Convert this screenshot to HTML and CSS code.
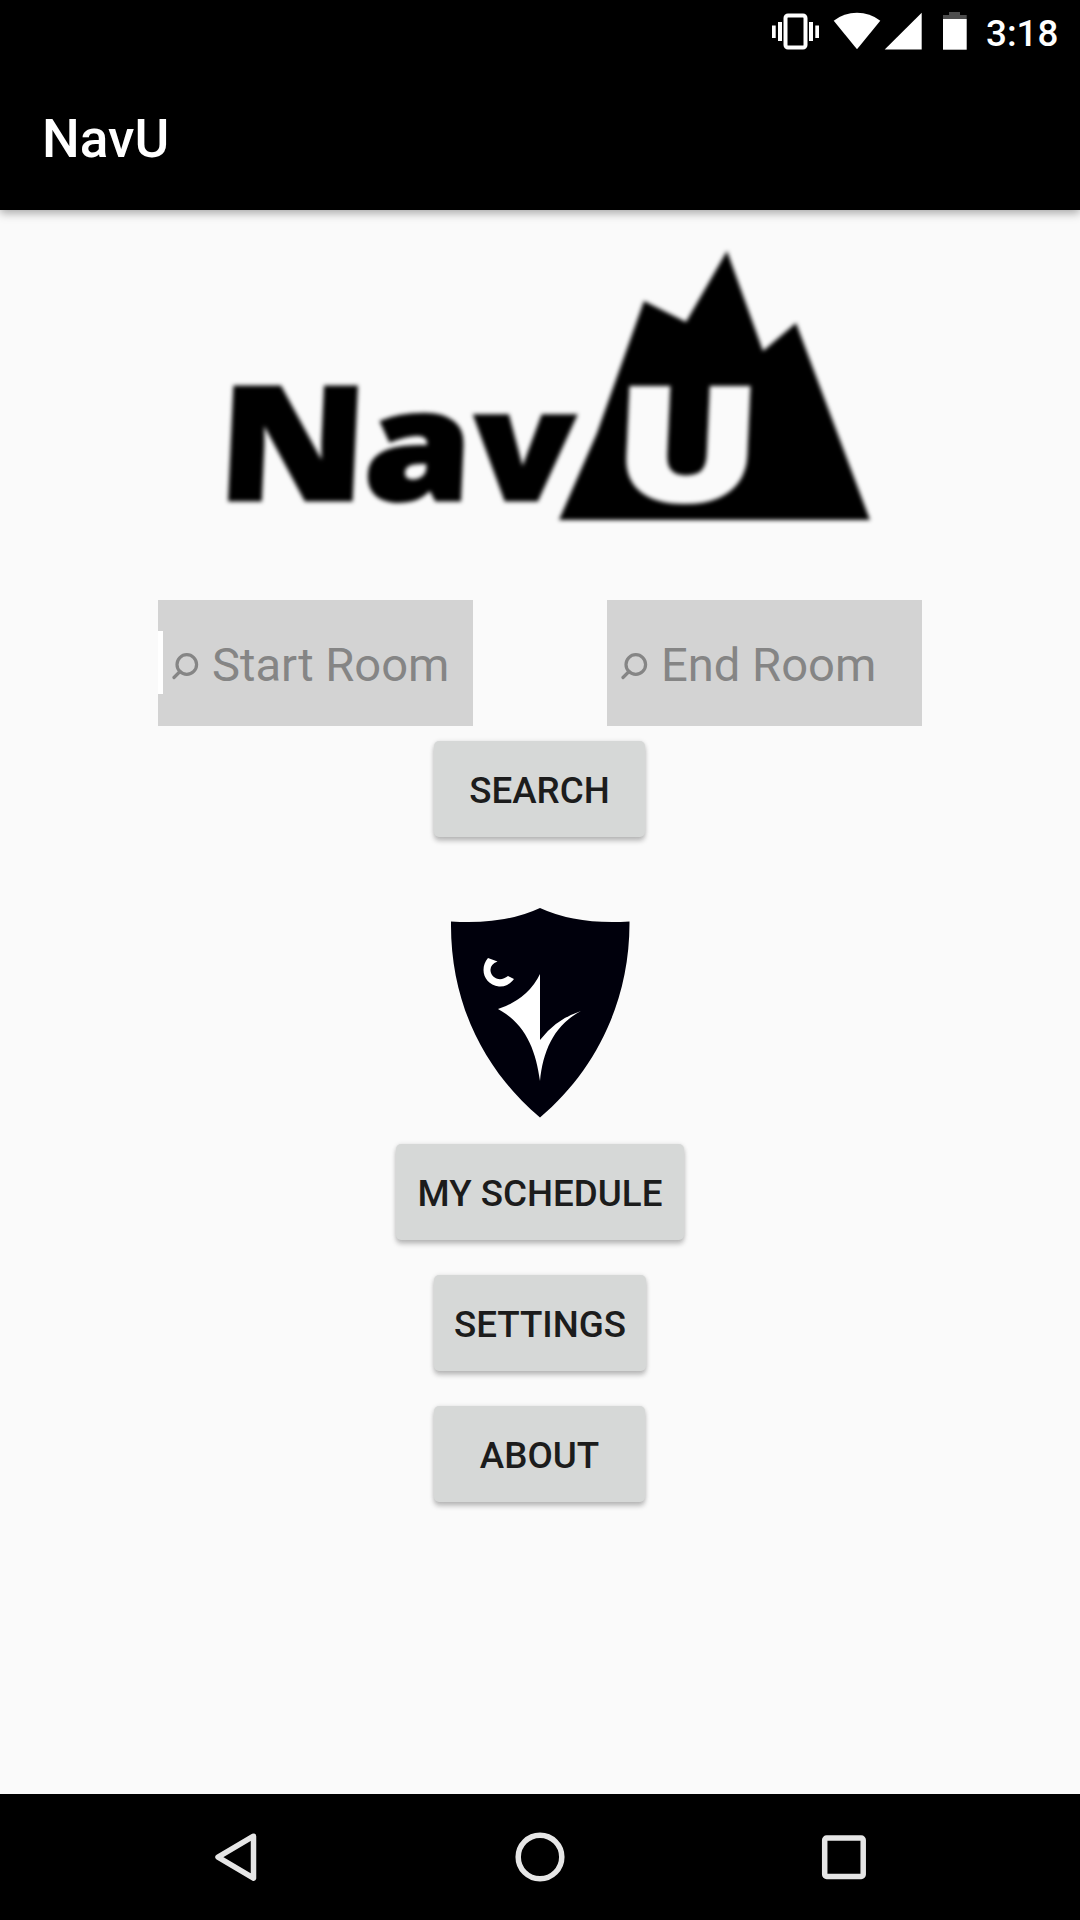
FILE: index.html
```html
<!DOCTYPE html>
<html lang="en">
<head>
<meta charset="utf-8">
<title>NavU</title>
<link rel="stylesheet" href="styles.css">
</head>
<body>
<div class="screen">
  <header class="top">
    <div class="status-bar">
      <svg class="status-icons" viewBox="0 0 200 63">
        <rect x="15.500" y="15.500" width="20" height="32" rx="2.500" fill="none" stroke="#fff" stroke-width="4"/>
        <path d="M2 25.500h3.700v12.500h-3.700zM8 22h4v19h-4zM39 22h4v19h-4zM45.300 25.500h3.700v12.500h-3.700z" fill="#fff"/>
        <path d="M63.700 20.700Q74 12.800 87 12.800T110.300 20.700L87 49.300z" fill="#fff"/>
        <path d="M151.700 12.700v36.800h-37z" fill="#fff"/>
        <path d="M173 19v-4h6v-3h11v3h6.700v4z" fill="#4d4d4d"/>
        <path d="M173 19h23.700v30.700h-23.700z" fill="#fff"/>
      </svg>
      <span class="clock">3:18</span>
    </div>
    <h1 class="title">NavU</h1>
  </header>

  <main class="content">
    <svg class="logo" viewBox="210 230 680 340" role="img" aria-label="NavU">
      <path d="M559 520L597 433L644 301L686 322L727 251L763 351L796 323L870 520z"/>
      <g class="logo-text" transform="translate(0 500) skewX(-2.600)">
        <text transform="translate(216 0) scale(1.105 .980)">N</text>
        <text transform="translate(362 0) scale(1.080 .945)">a</text>
        <text transform="translate(471 0) scale(1.020 .945)">v</text>
        <text class="logo-u" transform="translate(612 1) scale(1.190 .985)">U</text>
      </g>
    </svg>

    <div class="fields">
      <label class="field">
        <i class="cursor"></i>
        <svg class="search-icon" viewBox="0 0 28 28"><circle cx="14.800" cy="12.500" r="9.800"/><path d="M8 19.500L2 25.500"/></svg>
        <span>Start Room</span>
      </label>
      <label class="field">
        <svg class="search-icon" viewBox="0 0 28 28"><circle cx="14.800" cy="12.500" r="9.800"/><path d="M8 19.500L2 25.500"/></svg>
        <span>End Room</span>
      </label>
    </div>
    <button class="btn btn-short btn-search">Search</button>

    <svg class="shield" viewBox="0 0 180 212">
      <path fill="#00000c" d="M1 14.500Q54 18 90 1Q127 18 179.500 14.500C180 96 144 165 90 210.500C36 165 0 98 1 14.500z"/>
      <path fill="#fff" d="M90 67Q78 92 48 102C76 117 86 144 90 174C93 144 104 118 131 104Q106 112 90 133z"/>
      <path fill="#fff" d="M38 51L47.500 54.500Q38.500 58 41 66C44 73 52 74 58 69L64 72Q58 80 49 79.500C34 77 29 62 38 51z"/>
    </svg>

    <nav class="actions">
      <button class="btn btn-wide">My Schedule</button>
      <button class="btn">Settings</button>
      <button class="btn btn-short">About</button>
    </nav>
  </main>

  <footer class="nav-bar">
    <svg viewBox="0 0 126 126"><path d="M80.500 42.200L45 63.200L80.500 84.200z"/></svg>
    <svg viewBox="0 0 126 126"><circle cx="63" cy="63" r="21.800"/></svg>
    <svg viewBox="0 0 126 126"><rect x="43.700" y="44" width="38.500" height="38.500" rx="2"/></svg>
  </footer>
</div>
</body>
</html>
```
FILE: styles.css
```css
* { box-sizing: border-box; }
body { margin: 0; background: #fafafa; font-family: Roboto, sans-serif; }
svg { display: block; flex: none; }

.screen { width: 1080px; height: 1920px; display: flex; flex-direction: column; overflow: hidden; }

.top { height: 210px; background: #000; box-shadow: 0 3px 9px rgba(0, 0, 0, .34); }
.status-bar { height: 63px; display: flex; justify-content: flex-end; align-items: center; padding-right: 20px; }
.status-icons { width: 200px; height: 63px; }
.clock { width: 90px; padding-left: 16px; white-space: nowrap; color: #fff; font-size: 36.750px; font-weight: 500; line-height: 63px; padding-top: 4px; }
.title { margin: 0; padding-left: 42px; height: 147px; line-height: 153px; color: #fff; font-size: 53.200px; font-weight: 500; }

.content { flex: 1; display: flex; flex-direction: column; align-items: center; padding-top: 20px; }
.logo { width: 680px; height: 340px; margin-left: 20px; filter: blur(1.900px) drop-shadow(0 0 4px #fff); }
.logo-text { font-family: "Open Sans", sans-serif; font-weight: 800; font-size: 161.500px; fill: #000; stroke: #000; stroke-width: 3px; }
.logo-text .logo-u { fill: #fafafa; stroke: #fafafa; }

.fields { display: flex; gap: 134px; margin-top: 30px; }
.field { position: relative; width: 315px; height: 126px; display: flex; align-items: center; gap: 12px; padding-left: 14px; background: #d3d3d3; color: #858585; font-size: 47.150px; white-space: nowrap; }
.field span { padding-top: 4px; }
.cursor { position: absolute; left: 0; top: 31px; width: 5px; height: 63px; background: #fff; }
.search-icon { width: 28px; height: 28px; margin-top: 5px; fill: none; stroke: #858585; stroke-width: 3.200; stroke-linecap: round; }

.btn { width: 212px; height: 96px; padding: 2px 0 0; border: 0; border-radius: 5px; background: #d6d8d7; color: #1c1c1c; font-family: inherit; font-size: 36.750px; font-weight: 500; text-transform: uppercase; white-space: nowrap; box-shadow: 0 4px 5px rgba(0, 0, 0, .24), 0 0 4px rgba(0, 0, 0, .1); }
.btn-wide { width: 288px; }
.btn-short { width: 211px; margin-right: 1px; }
.btn-search { margin-top: 15px; }
.shield { width: 180px; height: 212px; margin-top: 70px; filter: blur(.700px); }
.actions { display: flex; flex-direction: column; align-items: center; gap: 35px; margin-top: 25px; }

.nav-bar { height: 126px; background: #000; display: flex; justify-content: center; gap: 178px; }
.nav-bar svg { width: 126px; height: 126px; fill: none; stroke: #e6e6e6; stroke-width: 5.500; stroke-linejoin: round; }
```
